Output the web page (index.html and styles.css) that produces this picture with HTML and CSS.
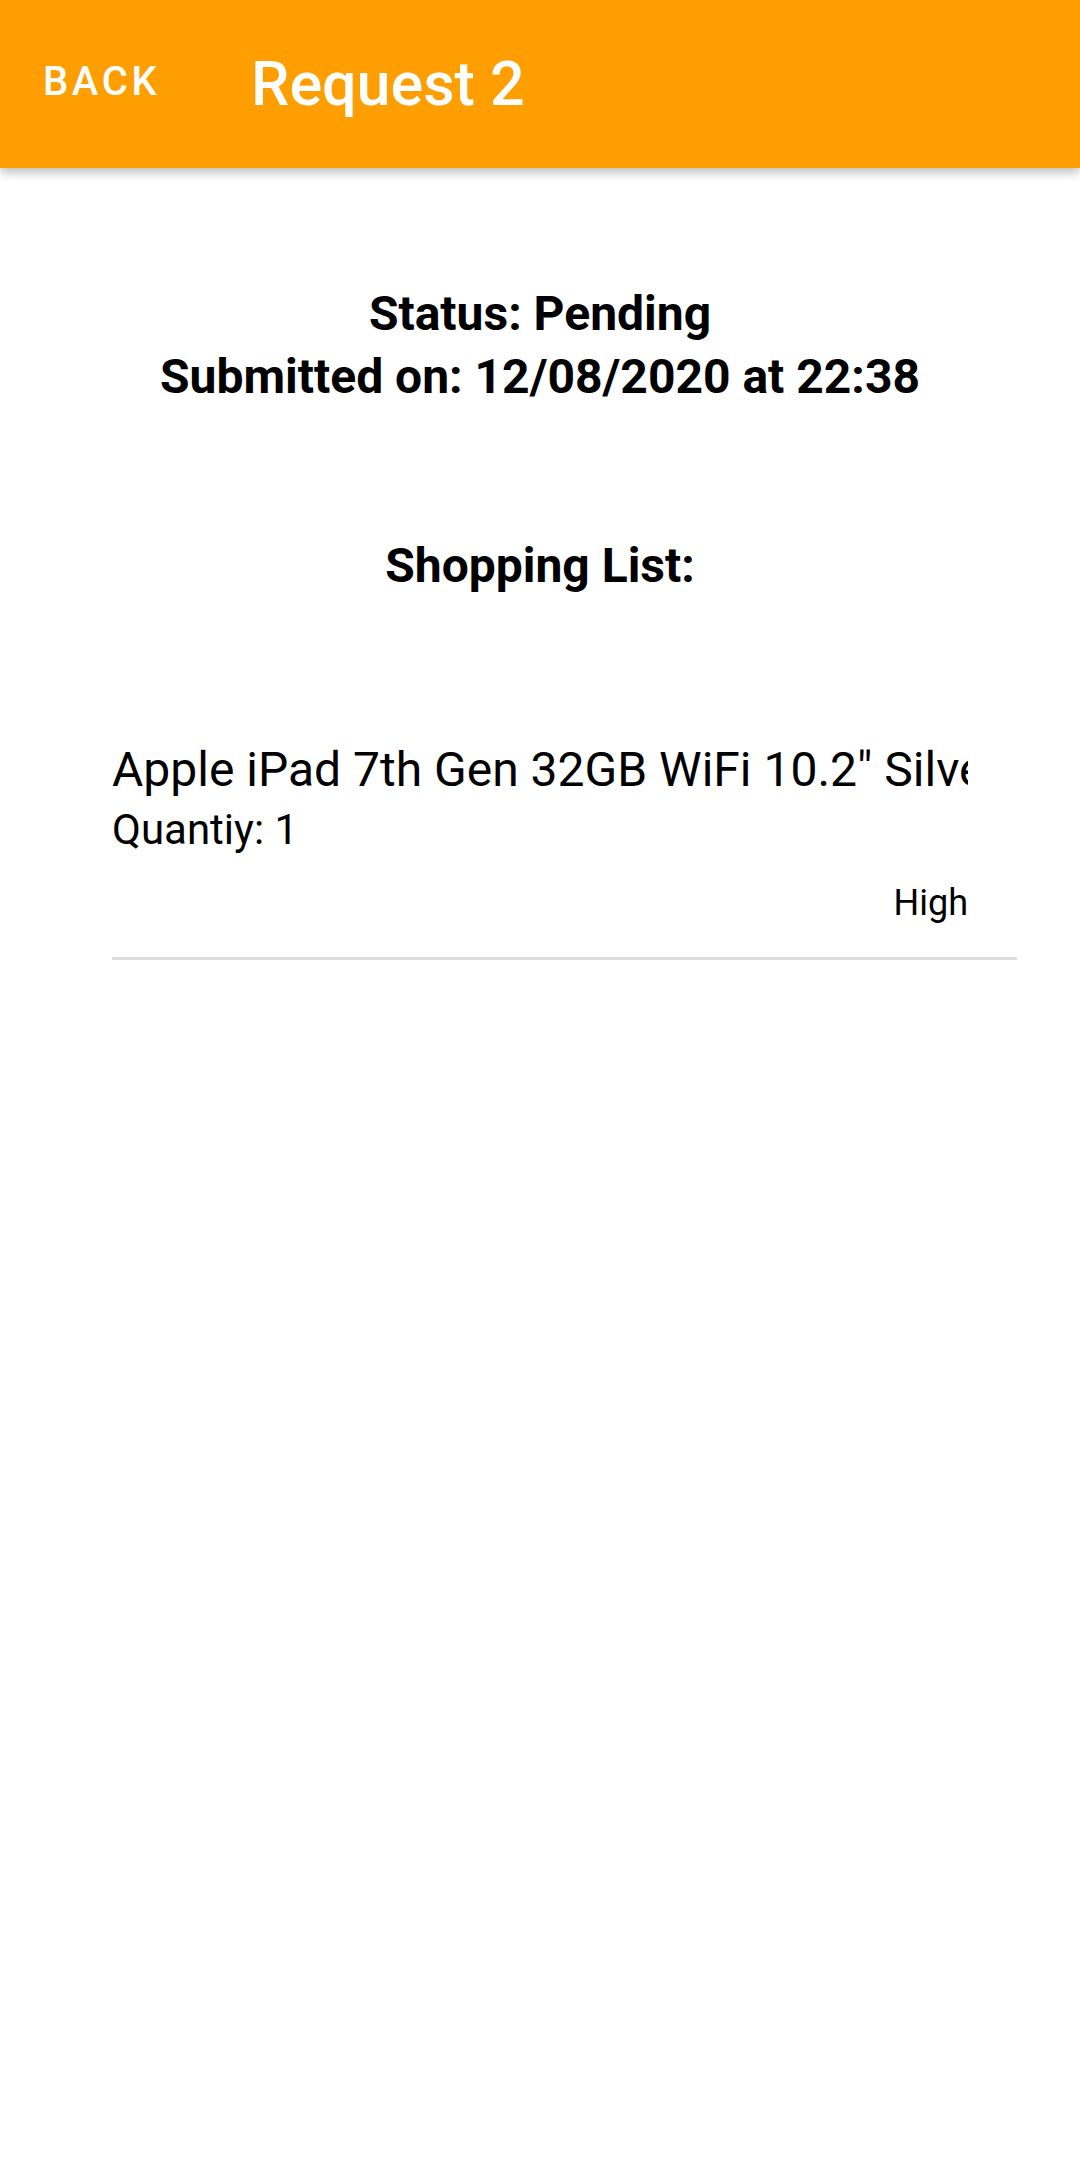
FILE: index.html
```html
<!DOCTYPE html>
<html>
<head>
<meta charset="utf-8">
<link rel="stylesheet" href="styles.css">
</head>
<body>
<header class="appbar">
  <div class="back">BACK</div>
  <div class="title">Request 2</div>
</header>
<main class="content">
  <div class="status">
    <div>Status: Pending</div>
    <div>Submitted on: 12/08/2020 at 22:38</div>
  </div>
  <div class="list-title">Shopping List:</div>
  <div class="item">
    <div class="item-body">
      <div class="item-name">Apple iPad 7th Gen 32GB WiFi 10.2" Silver</div>
      <div class="item-qty">Quantiy: 1</div>
      <div class="item-priority">High</div>
    </div>
    <div class="divider"></div>
  </div>
</main>
</body>
</html>
```
FILE: styles.css
```css
html, body {
  margin: 0;
  padding: 0;
  background: #ffffff;
  font-family: Roboto, "Noto Sans", sans-serif;
  color: #000;
}
.appbar {
  height: 168px;
  background: #ff9e00;
  display: flex;
  align-items: center;
  box-shadow: 0 4px 10px rgba(0,0,0,0.28);
  position: relative;
}
.back {
  color: #fff;
  font-weight: 500;
  font-size: 40px;
  letter-spacing: 3.6px;
  margin-left: 43px;
  width: 208px;
  margin-top: -6px;
}
.title {
  color: #fff;
  font-weight: 500;
  font-size: 61px;
  margin-top: 0;
}
.content {
  display: flex;
  flex-direction: column;
}
.status {
  margin-top: 114px;
  text-align: center;
  font-weight: 700;
  font-size: 48px;
  line-height: 63px;
}
.list-title {
  margin-top: 126px;
  text-align: center;
  font-weight: 700;
  font-size: 48px;
  line-height: 63px;
}
.item {
  margin: 143px 63px 0 112px;
}
.item-body {
  padding-right: 49px;
}
.item-name {
  font-size: 48px;
  line-height: 60px;
  white-space: nowrap;
  overflow: hidden;
}
.item-qty {
  font-size: 42px;
  line-height: 60px;
}
.item-priority {
  font-size: 36px;
  line-height: 52px;
  text-align: right;
  margin-top: 17px;
}
.divider {
  height: 3px;
  background: #dddddd;
  margin-top: 28px;
}
```
